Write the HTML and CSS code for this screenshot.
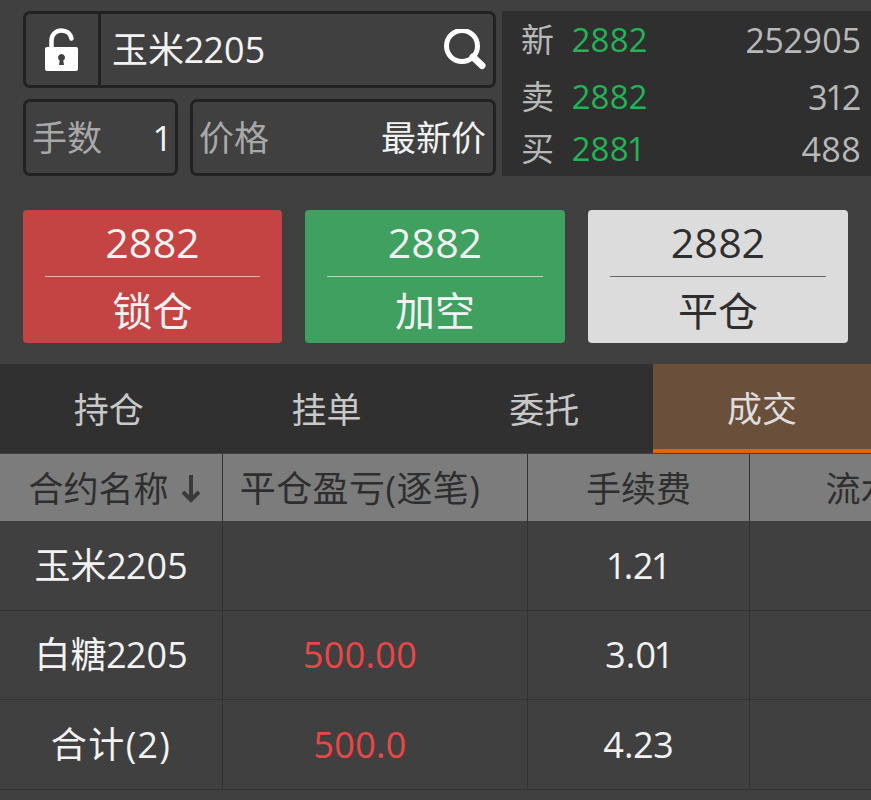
FILE: index.html

```html
<!DOCTYPE html>
<html lang="zh-CN">
<head>
    <meta charset="UTF-8">
    <meta name="viewport" content="width=device-width, initial-scale=1.0">
    <title>成交</title>
    <link rel="stylesheet" href="styles.css">
</head>
<body>

    <section class="top">
        <div class="order-box">
            <div class="search-box">
                <div class="lock">
                    <svg width="34" height="44" viewBox="0 0 34 44">
                        <path d="M6.500 20V12.500C6.500 6.500 11 2.500 16.500 2.500C21.500 2.500 25.500 5.500 26.500 10.500" fill="none" stroke="#fff" stroke-width="4.500" stroke-linecap="round"/>
                        <path fill-rule="evenodd" d="M2 19H31Q33 19 33 21V41Q33 43 31 43H2Q0 43 0 41V21Q0 19 2 19ZM16.500 26A3.500 3.500 0 0 0 14.700 32.500L14 37H19L18.300 32.500A3.500 3.500 0 0 0 16.500 26Z" fill="#fff"/>
                    </svg>
                </div>
                <span class="symbol">玉米2205</span>
                <svg class="search-icon" width="42" height="42" viewBox="0 0 42 42">
                    <circle cx="18" cy="17" r="15.500" fill="none" stroke="#fff" stroke-width="5"/>
                    <path d="M29 28L38 36.500" fill="none" stroke="#fff" stroke-width="7" stroke-linecap="round"/>
                </svg>
            </div>
            <div class="field-row">
                <div class="field field-qty"><span class="field-label">手数</span><span>1</span></div>
                <div class="field field-price"><span class="field-label">价格</span><span>最新价</span></div>
            </div>
        </div>
        <div class="quote">
            <div class="quote-row quote-new"><span class="q-label">新</span><span class="q-price">2882</span><span class="q-vol">252905</span></div>
            <div class="quote-row quote-sell"><span class="q-label">卖</span><span class="q-price">2882</span><span class="q-vol">312</span></div>
            <div class="quote-row quote-buy"><span class="q-label">买</span><span class="q-price">2881</span><span class="q-vol">488</span></div>
        </div>
    </section>

    <section class="actions">
        <div class="btn btn-red"><div class="btn-price">2882</div><div class="btn-name">锁仓</div></div>
        <div class="btn btn-green"><div class="btn-price">2882</div><div class="btn-name">加空</div></div>
        <div class="btn btn-light"><div class="btn-price">2882</div><div class="btn-name">平仓</div></div>
    </section>

    <nav class="tabs">
        <a>持仓</a>
        <a>挂单</a>
        <a>委托</a>
        <a class="active">成交</a>
    </nav>

    <div class="table">
        <div class="row head">
            <div class="cell cell-name">合约名称<svg class="sort" width="22" height="30" viewBox="0 0 22 30"><path d="M11 1V26M3 18L11 26L19 18" fill="none" stroke="#3a3a3a" stroke-width="4"/></svg></div>
            <div class="cell cell-pl">平仓盈亏(逐笔)</div>
            <div class="cell">手续费</div>
            <div class="cell cell-last">流水号</div>
        </div>
        <div class="row">
            <div class="cell">玉米2205</div>
            <div class="cell cell-pl red"></div>
            <div class="cell">1.21</div>
            <div class="cell cell-last"></div>
        </div>
        <div class="row row-short">
            <div class="cell">白糖2205</div>
            <div class="cell cell-pl red">500.00</div>
            <div class="cell">3.01</div>
            <div class="cell cell-last"></div>
        </div>
        <div class="row">
            <div class="cell cell-total">合计(2)</div>
            <div class="cell cell-pl red">500.0</div>
            <div class="cell">4.23</div>
            <div class="cell cell-last"></div>
        </div>
    </div>

</body>
</html>
```

FILE: styles.css

```css
html, body { margin: 0; padding: 0; height: 800px; overflow: hidden; }
body { background-color: #404040; color: #f2f2f2; font-family: "Open Sans", "Noto Sans CJK SC", sans-serif; font-size: 36px; line-height: 50px; font-variant-numeric: proportional-nums; }

.top { display: flex; padding: 11px 0 0 23px; gap: 6px; }
.order-box { width: 473px; }
.search-box { display: flex; align-items: center; height: 77px; box-sizing: border-box; border: 3px solid #222; border-radius: 7px; }
.lock { display: flex; align-items: center; justify-content: center; width: 75px; height: 100%; border-right: 3px solid #222; box-sizing: border-box; }
.symbol { flex: 1; padding-left: 11px; }
.search-icon { margin-right: 7px; }
.field-row { display: flex; gap: 12px; margin-top: 11px; }
.field { display: flex; justify-content: space-between; align-items: center; height: 77px; box-sizing: border-box; border: 3px solid #222; border-radius: 7px; padding: 0 6px; font-size: 35px; }
.field-qty { width: 155px; padding-right: 5px; }
.field-price { flex: 1; padding-right: 7px; }
.field-label { color: #a8a8a8; }

.quote { flex: 1; height: 165px; background-color: #2f2f2f; padding: 0 10px 0 19px; color: #b8b8b8; }
.quote-row { display: flex; align-items: center; font-size: 33px; }
.quote-new { height: 57px; }
.quote-sell { height: 58px; }
.quote-buy { height: 45px; }
.q-label { width: 51px; }
.q-price { color: #22b455; }
.q-vol { margin-left: auto; font-size: 34px; }

.actions { display: flex; gap: 23px; padding: 34px 23px 0; }
.btn { width: 260px; height: 133px; border-radius: 4px; text-align: center; padding: 0 22px; box-sizing: border-box; }
.btn-price { height: 66px; line-height: 64px; font-size: 41px; border-bottom: 1px solid rgba(255,255,255,.6); }
.btn-name { line-height: 68px; font-size: 40px; }
.btn-red { width: 259px; background-color: #c44444; }
.btn-green { background-color: #3fa060; }
.btn-light { background-color: #dcdcdc; color: #2e2e2e; }
.btn-light .btn-price { border-bottom-color: #666; }

.tabs { display: flex; margin-top: 21px; height: 89px; background-color: #303030; }
.tabs a { flex: 1; display: flex; align-items: center; justify-content: center; padding-top: 2px; color: #c8c8c8; font-size: 35px; box-sizing: border-box; }
.tabs a.active { background-color: #6a4f3a; padding-top: 4px; border-bottom: 4px solid #e06408; color: #ddd; }

.table { margin-top: 1px; width: 1000px; }
.row { display: grid; grid-template-columns: 223px 305px 222px 250px; height: 90px; box-sizing: border-box; border-bottom: 1px solid #333; }
.row-short { height: 89px; }
.cell { display: flex; align-items: center; justify-content: center; border-right: 1px solid #333; }
.cell-last { border-right: none; }
.cell-pl { padding-right: 30px; }
.cell-total { letter-spacing: 1.500px; }
.head { height: 67px; background-color: #7c7c7c; color: #2e2e2e; border-bottom: none; }
.head .cell { font-size: 35px; padding-top: 2px; }
.head .cell-name { padding-left: 8px; }
.head .cell-pl { font-size: 36px; letter-spacing: .4px; }
.head .cell-last { padding-left: 6px; }
.sort { margin-left: 11px; }
.red { color: #ec4646; }
```
